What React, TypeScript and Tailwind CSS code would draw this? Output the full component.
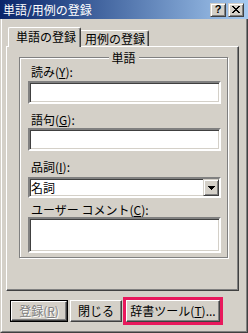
import React from "react";

const font = '"Noto Sans CJK JP", "Noto Sans", sans-serif';

function U({ children }: { children: React.ReactNode }) {
  return <span className="underline underline-offset-[1px]">{children}</span>;
}

const sunken =
  "bg-white border-2 border-t-[#808080] border-l-[#808080] border-r-white border-b-white shadow-[inset_1px_1px_0_#404040,inset_-1px_-1px_0_#d4d0c8]";
const raised =
  "bg-[#d4d0c8] border border-t-white border-l-white border-r-[#404040] border-b-[#404040] shadow-[inset_-1px_-1px_0_#808080]";
const smallRaised =
  "bg-[#d4d0c8] border border-t-[#d4d0c8] border-l-[#d4d0c8] border-r-[#404040] border-b-[#404040] shadow-[inset_1px_1px_0_#ffffff,inset_-1px_-1px_0_#808080]";

export default function App() {
  return (
    <div
      className="w-[248px] h-[333px] bg-[#d4d0c8] flex flex-col overflow-hidden text-[12px] leading-[14px] text-black"
      style={{ fontFamily: font }}
    >
      {/* Title bar */}
      <div className="h-[19px] flex items-center bg-gradient-to-r from-[#0a246a] to-[#a6caf0] pl-[3px] pr-[4px] shrink-0">
        <span className="flex-1 text-white text-[12px] leading-[14px]">単語/用例の登録</span>
        <div className={`${smallRaised} w-[16px] h-[14px] flex items-center justify-center`}>
          <span className="text-[11px] leading-[11px] font-bold" style={{ fontFamily: '"Liberation Sans", sans-serif' }}>?</span>
        </div>
        <div className={`${smallRaised} w-[16px] h-[14px] ml-[2px] flex items-center justify-center`}>
          <svg width="8" height="7" viewBox="0 0 8 7" shapeRendering="crispEdges">
            <path d="M0 0h2v1h-2zM6 0h2v1h-2zM1 1h2v1h-2zM5 1h2v1h-2zM2 2h4v1h-4zM3 3h2v1h-2zM2 4h4v1h-4zM1 5h2v1h-2zM5 5h2v1h-2zM0 6h2v1h-2zM6 6h2v1h-2z" fill="#000" />
          </svg>
        </div>
      </div>

      {/* Window body with frame */}
      <div className="flex-1 flex flex-col border-l border-r border-b border-l-[#d4d0c8] border-r-[#404040] border-b-[#404040]">
        <div className="flex-1 flex flex-col border-l border-r border-b border-l-white border-r-[#808080] border-b-[#808080]">
          {/* Tabs */}
          <div className="mt-[8px] ml-[6px] h-[20px] -mb-[1px] flex items-start relative z-10">
            <div className="h-[20px] w-[73px] bg-[#d4d0c8] border-t border-l border-r border-t-white border-l-white border-r-[#404040] rounded-tl-[2px] rounded-tr-[2px] shadow-[inset_-1px_0_0_#808080] pl-[7px] pt-[2px]">
              単語の登録
            </div>
            <div className="mt-[3px] h-[16px] w-[68px] bg-[#d4d0c8] border-t border-r border-t-white border-r-[#404040] rounded-tr-[2px] shadow-[inset_-1px_0_0_#808080] pl-[4px] pt-[1px]">
              用例の登録
            </div>
          </div>

          {/* Tab panel */}
          <div className="ml-[4px] w-[233px] h-[245px] border border-t-white border-l-white border-r-[#404040] border-b-[#404040] shadow-[inset_-1px_-1px_0_#808080] flex flex-col">
            {/* Group box */}
            <div className="relative ml-[12px] mt-[10px] w-[209px] h-[201px] border border-[#808080] shadow-[inset_1px_1px_0_#ffffff,1px_1px_0_#ffffff] pl-[8px] pt-[7px] flex flex-col">
              <div className="absolute top-[-7px] left-1/2 -translate-x-1/2 bg-[#d4d0c8] px-[3px] h-[14px]">
                単語
              </div>
              <div className="h-[14px] pl-[3px]">
                読み(<U>Y</U>):
              </div>
              <div className={`${sunken} mt-[2px] w-[193px] h-[23px]`} />
              <div className="h-[14px] pl-[3px] mt-[9px]">
                語句(<U>G</U>):
              </div>
              <div className={`${sunken} mt-[1px] w-[193px] h-[23px]`} />
              <div className="h-[14px] pl-[3px] mt-[9px]">
                品詞(<U>I</U>):
              </div>
              <div className={`${sunken} mt-[3px] w-[193px] h-[21px] flex items-center`}>
                <span className="flex-1 pl-[1px]">名詞</span>
                <div className={`${smallRaised} w-[16px] h-[17px] flex items-center justify-center`}>
                  <svg width="7" height="4" viewBox="0 0 7 4" shapeRendering="crispEdges">
                    <path d="M0 0h7v1h-7zM1 1h5v1h-5zM2 2h3v1h-3zM3 3h1v1h-1z" fill="#000" />
                  </svg>
                </div>
              </div>
              <div className="h-[14px] pl-[3px] mt-[5px]">
                ユーザー コメント(<U>C</U>):
              </div>
              <div className={`${sunken} w-[193px] h-[36px]`} />
            </div>
          </div>

          {/* Bottom buttons */}
          <div className="mt-[9px] ml-[8px] flex items-start">
            <div className="border border-black">
              <div className={`${raised} w-[56px] h-[20px] flex items-center justify-center text-[#808080] [text-shadow:1px_1px_0_#ffffff]`}>
                登録(<U>R</U>)
              </div>
            </div>
            <div className={`${raised} ml-[2px] w-[52px] h-[22px] flex items-center justify-center`}>
              閉じる
            </div>
            <div className={`${raised} ml-[4px] w-[94px] h-[22px] flex items-center justify-center outline-[3px] outline-solid outline-[#e8185c]`}>
              辞書ツール(<U>T</U>)...
            </div>
          </div>
        </div>
      </div>
    </div>
  );
}
